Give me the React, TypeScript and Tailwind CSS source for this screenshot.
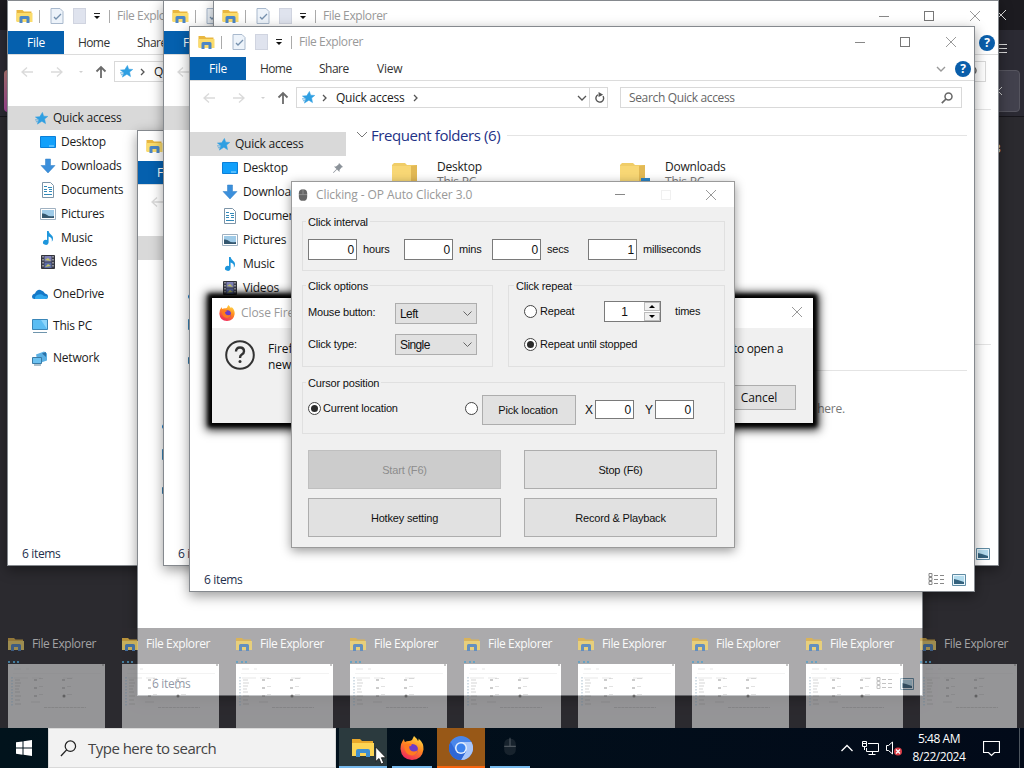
import { clsx } from "clsx";
import type { ReactNode } from "react";

const FolderIcon = ({ className }: { className?: string }) => (
  <svg viewBox="0 0 16 16" className={clsx("shrink-0", className)}>
    <path d="M0 2h6l1.500 1.500H15V13H0z" fill="#e9b740" />
    <path d="M0 5h16v9H0z" fill="#fbdc6c" />
    <path d="M3 15V9.500q0-1.500 1.500-1.500h7q1.500 0 1.500 1.500V15h-3v-4H6v4z" fill="#4c86c6" />
  </svg>
);

const StarIcon = ({ className }: { className?: string }) => (
  <svg viewBox="0 0 14 14" className={clsx("shrink-0", className)}>
    <path d="M8 .5l1.300 4 4.400.300-3.400 2.700 1 5-3.900-2.600L2.600 13l1.600-4.700L.5 5.500l4.600-.4z" fill="#2f9fe2" stroke="#2f9fe2" strokeWidth=".6" />
    <path d="M0 8.500h4M1 10.500h2.500" stroke="#5aa9dd" />
  </svg>
);

const sideIcons: Record<string, ReactNode> = {
  Desktop: (
    <>
      <path d="M.5 2.500h15v11H.5z" fill="#12a0fb" stroke="#0b7fd8" />
      <path d="M9 12h5" stroke="#9bdcff" />
    </>
  ),
  Downloads: <path d="M5.500 1h5v6.500H15L8 15 1 7.500h4.500z" fill="#3b8fdb" stroke="#2f7cc4" strokeWidth=".5" />,
  Documents: (
    <>
      <path d="M2.500.5h8l3 3v12h-11z" fill="#fff" stroke="#7d95a8" />
      <path d="M4 4.500h3M4 7.500h3M9 7.500h3M4 9.500h3M9 9.500h3M4 12.500h8M8 5.500h4" stroke="#3289b8" />
    </>
  ),
  Pictures: (
    <>
      <path d="M.5 2.500h15v11H.5z" fill="#fff" stroke="#9fb1c1" />
      <path d="M2 4h12v8H2z" fill="#9fcbe8" />
      <path d="M2 12V7.500q3-.500 5 1.500t7 1v2z" fill="#34576f" />
    </>
  ),
  Music: (
    <path
      d="M7 1h1.600q.4 2.500 2.700 4t1.500 5q-.5 1-1 1.500.8-3.800-3.200-5V12.500a2.800 2.500 0 1 1-1.600-2.400z"
      fill="#1e96dc"
    />
  ),
  Videos: (
    <>
      <path d="M1.500 1.500h13v13h-13z" fill="#3c3f4d" stroke="#33343b" />
      <path d="M4.500 2h7v5.500h-7z" fill="#7f82b8" />
      <path d="M4.500 8.500h7V14h-7z" fill="#596aa8" />
      <path d="M5 6l3-2 3 3zM5 13l3-3 3 2z" fill="#c3c565" />
      <path d="M3 2v12M13 2v12" stroke="#e3e3e3" strokeDasharray="1.500 1.500" />
    </>
  ),
  OneDrive: (
    <>
      <path d="M0 11q0-3 3-3.500Q5 3 8.500 4T13 7.500q3 .5 3 3T13.500 13H2.500Q0 13 0 11z" fill="#1579c8" />
      <path d="M3 13q-.5-4 4-4.500 3-1 5 1.500 3 0 4 1-.5 2-3 2z" fill="#33a9ee" />
    </>
  ),
  "This PC": (
    <>
      <path d="M.5 1.500h15v10H.5z" fill="#5bbdf3" stroke="#3a86b8" />
      <path d="M9 2h6v9z" fill="#8cd5fb" />
      <path d="M1 14.500h14" stroke="#6f95ad" />
    </>
  ),
  Network: (
    <>
      <path d="M4 4.500l8-3 3 2v7l-9 3z" fill="#5cb0e3" />
      <path d="M0.500 7.500h9v6h-9z" fill="#6cc1f0" stroke="#3a7ba6" />
      <path d="M10 3.500l4-1.500v5z" fill="#2a72a8" />
      <path d="M2 15h7" stroke="#5d8197" />
    </>
  ),
};

const quickLinks = ["Desktop", "Downloads", "Documents", "Pictures", "Music", "Videos"];
const drives = ["OneDrive", "This PC", "Network"];

const SideIcon = ({ name }: { name: string }) => (
  <svg viewBox="0 0 16 16" className="w-4 h-4 shrink-0">
    {sideIcons[name]}
  </svg>
);

const CloseGlyph = () => (
  <svg viewBox="0 0 12 12" className="w-3 h-3">
    <path d="M1 1l10 10M11 1L1 11" stroke="#999" fill="none" />
  </svg>
);

const ViewIcons = () => (
  <div className="flex items-center gap-[7px]">
    <svg viewBox="0 0 17 13" className="w-[17px] h-[13px]" fill="none">
      <path d="M1 .5h3v3H1zM1 4.500h3v3H1zM1 8.500h3v3H1z" stroke="#888" />
      <path d="M6 2.500h11M6 6.500h11M6 10.500h11" stroke="#888" strokeDasharray="4 2" />
    </svg>
    <svg viewBox="0 0 14 12" className="w-[14px] h-3">
      <path d="M.5.5h13v11H.5z" fill="#eaf6fc" stroke="#5f8ba3" />
      <path d="M2 2h10v8H2z" fill="#b4dcee" />
      <path d="M2 5l4 1 6 2v2H2z" fill="#34627d" />
    </svg>
  </div>
);

const FolderTile = ({ name, badge }: { name: string; badge?: boolean }) => (
  <div className="flex w-[228px]">
    <svg viewBox="0 0 30 30" className="w-[30px] h-[30px] shrink-0">
      <path d="M0 6l2-2h11l2 2h10v20H0z" fill="#f0cd68" />
      <path d="M0 7h19v22H0z" fill="#f8d775" />
      <path d="M19 7l6-1v21l-6 2z" fill="#e2b955" />
      {badge && <path d="M21 19h9v10h-9z" fill="#2b84c6" />}
    </svg>
    <div className="flex flex-col pl-[15px] leading-[15px]">
      <span>{name}</span>
      <span className="text-[#777]">This PC</span>
    </div>
  </div>
);

const ExplorerWindow = ({ className, active }: { className: string; active?: boolean }) => (
  <div
    className={clsx(
      "absolute w-[786px] h-[566px] flex flex-col overflow-hidden bg-white border border-[#85898e] text-[12px] tracking-[-0.22px] text-[#1b1b1b] shadow-[0_4px_12px_rgba(0,0,0,0.4)]",
      className
    )}
  >
    {/* Title bar */}
    <div className="h-[30px] shrink-0 flex items-center text-[#999]">
      <FolderIcon className="ml-[8px] w-[17px] h-4" />
      <span className="ml-[6px] w-px h-[13px] bg-[#aaa]" />
      <svg viewBox="0 0 14 16" className="ml-[10px] w-[14px] h-4">
        <path d="M1 .5h9l3 3v12H1z" fill="#edf3fa" stroke="#a9b9cd" />
        <path d="M4 9l2 2 5-5" stroke="#7691ae" strokeWidth="1.300" fill="none" />
      </svg>
      <span className="ml-[9px] w-[13px] h-4 bg-[#dfe3ee] border border-[#d0d4e0]" />
      <svg viewBox="0 0 8 8" className="ml-[7px] w-2 h-2">
        <path d="M1 1.500h6" stroke="#222" />
        <path d="M1 4h6L4 7z" fill="#111" />
      </svg>
      <span className="ml-2 w-px h-[13px] bg-[#aaa]" />
      <span className="ml-[7px] tracking-[-0.4px]">File Explorer</span>
      <div className="ml-auto flex">
        <span className="w-[46px] flex justify-center items-center">
          <span className="w-[10px] h-px bg-[#888]" />
        </span>
        <span className="w-[44px] flex justify-center items-center">
          <span className="w-[10px] h-[10px] border border-[#777]" />
        </span>
        <span className="w-[47px] flex justify-center items-center">
          <CloseGlyph />
        </span>
      </div>
    </div>

    {/* Ribbon tabs */}
    <div className="h-6 shrink-0 flex items-center border-b border-[#dcdcdc] text-[#333]">
      <span className="w-[56px] h-[23px] flex items-center justify-center bg-[#0560ae] text-white">File</span>
      <span className="ml-[14px] w-[59px] tracking-[-0.6px]">Home</span>
      <span className="w-[58px] tracking-[-0.5px]">Share</span>
      <span>View</span>
      <svg viewBox="0 0 10 6" className="ml-auto w-[10px] h-[6px]">
        <path d="M1 1l4 4 4-4" stroke="#999" strokeWidth="1.400" fill="none" />
      </svg>
      <span className="ml-[9px] mr-[3px] w-4 h-4 rounded-full bg-[#0a5eaa] text-white text-[12px] font-bold leading-4 text-center">
        ?
      </span>
    </div>

    {/* Address bar */}
    <div className="mt-[6px] h-[21px] shrink-0 flex items-center">
      <svg viewBox="0 0 94 16" className="ml-[7px] w-[94px] h-4" fill="none">
        <path d="M7 8h11M12 3.500L7 8l5 4.500M36 8h11M42 3.500L47 8l-5 4.500" stroke="#dadada" strokeWidth="1.300" />
        <path d="M64 7h4l-2 2z" fill="#d0d0d0" />
        <path d="M86 14V3M81.500 7.500L86 3l4.500 4.500" stroke="#6b6b6b" strokeWidth="1.800" />
      </svg>
      <div className="ml-[5px] w-[312px] h-[21px] border border-[#d9d9d9] flex items-center">
        <StarIcon className="ml-[5px] w-[13px] h-[13px]" />
        <svg viewBox="0 0 5 8" className="ml-[7px] w-[5px] h-2">
          <path d="M1 1l3 3-3 3" stroke="#555" strokeWidth="1.300" fill="none" />
        </svg>
        <span className="ml-[9px]">Quick access</span>
        <svg viewBox="0 0 5 8" className="ml-2 w-[5px] h-2">
          <path d="M1 1l3 3-3 3" stroke="#555" strokeWidth="1.300" fill="none" />
        </svg>
        <svg viewBox="0 0 10 6" className="ml-auto w-[10px] h-[6px]">
          <path d="M1 1l4 4 4-4" stroke="#555" strokeWidth="1.300" fill="none" />
        </svg>
        <span className="ml-[2px] w-px h-full bg-[#d9d9d9]" />
        <svg viewBox="0 0 12 12" className="ml-[4px] mr-[2px] w-[11px] h-[11px]">
          <path d="M9.800 4.500A4.200 4.200 0 1 1 4.500 3" stroke="#555" strokeWidth="1.500" fill="none" />
          <path d="M5 0v5.500L10 3z" fill="#555" />
        </svg>
      </div>
      <div className="ml-[12px] w-[342px] h-[21px] border border-[#d9d9d9] flex items-center justify-between pl-2 pr-[8px] text-[#666]">
        <span className="tracking-[-0.35px]">Search Quick access</span>
        <svg viewBox="0 0 12 12" className="w-3 h-3">
          <circle cx="7.500" cy="4.500" r="3.500" stroke="#666" strokeWidth="1.500" fill="none" />
          <path d="M5 7L.8 11.200" stroke="#666" strokeWidth="1.700" />
        </svg>
      </div>
    </div>

    <div className="flex-1 min-h-0 flex">
      {/* Navigation pane */}
      <div className="w-[156px] shrink-0 pt-[24px] flex flex-col">
        <div className="h-6 shrink-0 flex items-center bg-[#d9d9d9] pl-[27px]">
          <StarIcon className="w-[13px] h-[13px]" />
          <span className="ml-[5px]">Quick access</span>
        </div>
        {quickLinks.map((name) => (
          <div key={name} className="h-6 shrink-0 flex items-center pl-[32px]">
            <SideIcon name={name} />
            <span className="ml-[5px]">{name}</span>
            {name === "Desktop" && (
              <svg viewBox="0 0 10 10" className="ml-auto mr-[3px] w-[10px] h-[10px]">
                <path d="M6 0l4 4-1.500.5L6.500 7v2L4 6.500.5 10 0 9.500 3.500 6 1 3.500h2L5.500 1.500z" fill="#8b9299" />
              </svg>
            )}
          </div>
        ))}
        {drives.map((name) => (
          <div key={name} className="h-6 mt-2 shrink-0 flex items-center pl-[24px]">
            <SideIcon name={name} />
            <span className="ml-[5px]">{name}</span>
          </div>
        ))}
      </div>

      {/* File list */}
      <div className="flex-1 flex flex-col pt-[17px] pr-[7px]">
        <div className="pl-[11px] h-5 flex items-center text-[15px] tracking-[-0.42px] leading-[20px] text-[#1e3287]">
          <svg viewBox="0 0 10 6" className="w-[10px] h-[6px]">
            <path d="M0 0l5 5 5-5" stroke="#777" fill="none" />
          </svg>
          {active && <span className="ml-1 mr-[7px] -mt-px">Frequent folders (6)</span>}
          <span className="flex-1 h-px bg-[#e4e4e4]" />
        </div>
        <div className="mt-[14px] pl-[46px] h-[30px] flex">
          {active && (
            <>
              <FolderTile name="Desktop" />
              <FolderTile name="Downloads" badge />
            </>
          )}
        </div>
        <div className="mt-[181px] h-px shrink-0 bg-[#e4e4e4]" />
        {active && <span className="mt-[29px] mr-[122px] self-end text-[#777]">here.</span>}
      </div>
    </div>

    {/* Status bar */}
    <div className="h-[23px] shrink-0 flex items-center justify-between pl-[14px] pr-[8px] text-[#1e2f4d]">
      <span className="tracking-[-0.35px]">6 items</span>
      <ViewIcons />
    </div>
  </div>
);

const FirefoxIcon = ({ className }: { className?: string }) => (
  <svg viewBox="0 0 24 24" className={clsx("shrink-0", className)}>
    <defs>
      <linearGradient id="flame" x1="0.800" y1="0" x2="0.300" y2="1">
        <stop offset="0" stopColor="#ffe14a" />
        <stop offset="0.450" stopColor="#ff8a1f" />
        <stop offset="1" stopColor="#f0245f" />
      </linearGradient>
    </defs>
    <path
      d="M14 0q3 2.500 4 5 1-1 .5-2.500Q24 7 23.500 13.500 22 24 12 24 1.500 23.500.5 13 .5 7 4 3q0 2 1 3 1.500-1 4-1 1.500 0 3-1 1-2 2-4z"
      fill="url(#flame)"
    />
    <circle cx="12.500" cy="13.500" r="5.500" fill="#6d3bc7" />
    <path d="M4 10q4-4 8-1.500-1 2-3 2 .5 5 5 5 3 0 4-2.500-.5 6-6 6.500Q5 19 4 10z" fill="#ff7a20" />
  </svg>
);

const FirefoxDialog = () => (
  <div className="absolute left-[212px] top-[298px] w-[601px] h-[125px] flex flex-col bg-[#f0f0f0] text-[12px] tracking-[-0.1px] text-[#111] shadow-[0_0_4px_4px_#000,0_1px_9px_6px_rgba(0,0,0,0.85)]">
    <div className="h-[30px] shrink-0 flex items-center bg-white pl-[7px] pr-[10px] text-[#999]">
      <FirefoxIcon className="w-4 h-4" />
      <span className="ml-[6px]">Close Firefox</span>
      <span className="ml-auto -mt-[2px]">
        <CloseGlyph />
      </span>
    </div>
    <div className="flex pl-[13px] pt-[12px]">
      <svg viewBox="0 0 30 30" className="w-[30px] h-[30px]" fill="none">
        <circle cx="15" cy="15" r="13.800" stroke="#333" strokeWidth="2" />
        <path d="M11 11.500q0-4 4-4t4 3.700q0 2-2.200 3.300Q15 15.600 15 18" stroke="#333" strokeWidth="2.400" />
        <circle cx="15" cy="21.500" r="1.500" fill="#333" />
      </svg>
      <div className="ml-[13px] pt-px w-[515px] leading-4 flex flex-col">
        <div className="flex justify-between">
          <span>Firefox</span>
          <span className="tracking-[-0.35px]">to open a</span>
        </div>
        <span>new</span>
      </div>
    </div>
    <div className="mt-auto mb-[13px] mr-[17px] self-end w-[76px] h-[25px] border border-[#adadad] bg-[#e1e1e1] flex items-center justify-center pl-[2px]">
      Cancel
    </div>
  </div>
);

const MouseIcon = ({ className }: { className?: string }) => (
  <svg viewBox="0 0 12 16" className={clsx("shrink-0", className)}>
    <path d="M1 6q0-5 5-5t5 5v4q0 5-5 5t-5-5z" fill="currentColor" />
    <path d="M6 0v7M1 7.500h10" stroke="#fff" strokeOpacity=".3" fill="none" />
  </svg>
);

const NumberBox = ({ value, className }: { value: string; className?: string }) => (
  <span
    className={clsx(
      "border border-[#7a7a7a] bg-white flex items-center justify-end pr-[2px] text-[12px]",
      className
    )}
  >
    {value}
  </span>
);

const Radio = ({ checked }: { checked?: boolean }) => (
  <span className="w-[13px] h-[13px] shrink-0 rounded-full border border-[#444] bg-white flex items-center justify-center">
    {checked && <span className="w-[7px] h-[7px] rounded-full bg-[#2b2b2b]" />}
  </span>
);

const Select = ({ value }: { value: string }) => (
  <span className="w-[82px] h-[21px] border border-[#adadad] bg-[#e1e1e1] flex items-center justify-between pl-1 pr-1 text-[12px] tracking-[-0.6px]">
    {value}
    <svg viewBox="0 0 9 6" className="w-[9px] h-[6px]">
      <path d="M.5.5l4 4 4-4" stroke="#666" fill="none" />
    </svg>
  </span>
);

const Group = ({ title, className, children }: { title: string; className: string; children: ReactNode }) => (
  <div className={clsx("border border-[#e0e0e0] flex flex-col", className)}>
    <span className="-mt-[7px] ml-[3px] px-[2px] self-start h-[14px] leading-[14px] bg-[#f0f0f0]">{title}</span>
    {children}
  </div>
);

const intervals = [
  { label: "hours", value: "0", width: "w-[96px]" },
  { label: "mins", value: "0", width: "w-[88px]" },
  { label: "secs", value: "0", width: "w-[96px]" },
  { label: "milliseconds", value: "1", width: "w-[120px]" },
];

const actions = ["Start (F6)", "Stop (F6)", "Hotkey setting", "Record & Playback"];

const AutoClicker = () => (
  <div className="absolute left-[291px] top-[181px] w-[444px] h-[367px] flex flex-col border border-[#9a9a9a] bg-[#f0f0f0] text-[#111] shadow-[0_3px_10px_rgba(0,0,0,0.4)]">
    <div className="h-[25px] shrink-0 flex items-center bg-white pl-[6px] text-[#999] text-[12px] tracking-[-0.1px]">
      <MouseIcon className="w-[10px] h-[14px] text-[#666]" />
      <span className="ml-2">Clicking - OP Auto Clicker 3.0</span>
      <div className="ml-auto flex">
        <span className="w-[46px] flex justify-center items-center">
          <span className="w-[10px] h-px bg-[#888]" />
        </span>
        <span className="w-[45px] flex justify-center items-center">
          <span className="w-[10px] h-[10px] border border-[#f0f0f0]" />
        </span>
        <span className="w-[46px] flex justify-center items-center">
          <CloseGlyph />
        </span>
      </div>
    </div>

    <div className="flex-1 flex flex-col pl-[10px] pt-[14px] font-['Liberation_Sans',Arial,sans-serif] text-[11px] tracking-[-0.18px]">
      <Group title="Click interval" className="w-[423px] h-[50px]">
        <div className="mt-[10px] pl-[5px] flex">
          {intervals.map((item) => (
            <div key={item.label} className={clsx("flex items-center", item.width)}>
              <NumberBox value={item.value} className="w-[49px] h-[21px]" />
              <span className="ml-[6px]">{item.label}</span>
            </div>
          ))}
        </div>
      </Group>

      <div className="mt-[14px] flex gap-[15px]">
        <Group title="Click options" className="w-[191px] h-[82px]">
          <div className="mt-[10px] pl-[5px] flex items-center">
            <span className="w-[87px] -mt-[2px]">Mouse button:</span>
            <Select value="Left" />
          </div>
          <div className="mt-[10px] pl-[5px] flex items-center">
            <span className="w-[87px] -mt-px">Click type:</span>
            <Select value="Single" />
          </div>
        </Group>
        <Group title="Click repeat" className="w-[217px] h-[82px] [&>span:first-child]:ml-[5px]">
          <div className="mt-[8px] pl-[15px] flex items-center">
            <Radio />
            <span className="ml-[3px] w-[64px]">Repeat</span>
            <span className="w-[57px] h-[21px] border border-[#7a7a7a] bg-white flex items-center text-[12px]">
              <span className="flex-1 text-center">1</span>
              <span className="w-[16px] h-[19px] flex flex-col gap-px">
                <span className="flex-1 border border-[#bbb] bg-[#f0f0f0] flex items-center justify-center">
                  <svg viewBox="0 0 6 3" className="w-[6px] h-[3px]">
                    <path d="M0 3l3-3 3 3z" />
                  </svg>
                </span>
                <span className="flex-1 border border-[#bbb] bg-[#f0f0f0] flex items-center justify-center">
                  <svg viewBox="0 0 6 3" className="w-[6px] h-[3px]">
                    <path d="M0 0l3 3 3-3z" />
                  </svg>
                </span>
              </span>
            </span>
            <span className="ml-[14px]">times</span>
          </div>
          <div className="mt-[14px] h-[17px] pl-[15px] flex items-center">
            <Radio checked />
            <span className="ml-[3px]">Repeat until stopped</span>
          </div>
        </Group>
      </div>

      <Group title="Cursor position" className="mt-[15px] w-[423px] h-[52px]">
        <div className="mt-[5px] pl-[5px] flex items-center">
          <span className="-mt-[3px] flex items-center">
            <Radio checked />
            <span className="ml-[2px] w-[142px]">Current location</span>
            <Radio />
          </span>
          <span className="ml-[4px] w-[94px] h-[30px] border border-[#adadad] bg-[#e1e1e1] flex items-center justify-center pr-[2px]">
            Pick location
          </span>
          <span className="-mt-px flex items-center">
            <span className="ml-[9px] w-[10px] text-[12px]">X</span>
            <NumberBox value="0" className="w-[39px] h-[19px]" />
            <span className="ml-[11px] w-[10px] text-[12px]">Y</span>
            <NumberBox value="0" className="w-[39px] h-[19px]" />
          </span>
        </div>
      </Group>

      <div className="mt-[16px] ml-[6px] w-[410px] grid grid-cols-[193px_193px] gap-x-[23px] gap-y-[9px]">
        {actions.map((label, i) => (
          <span
            key={label}
            className={clsx(
              "h-[39px] border flex items-center justify-center pt-px",
              i === 0 ? "border-[#bfbfbf] bg-[#cccccc] text-[#8d8d8d]" : "border-[#adadad] bg-[#e1e1e1]"
            )}
          >
            {label}
          </span>
        ))}
      </div>
    </div>
  </div>
);

const Thumbnail = () => (
  <svg viewBox="0 0 97 64" className="w-[97px] h-16 shrink-0 bg-white/50" fill="none">
    <path d="M6 5h7M18 5h3M6 14h14M24 14h9M55 14h10" stroke="#777" strokeOpacity=".25" strokeWidth=".7" />
    <path d="M5 9.500h88" stroke="#777" strokeOpacity=".15" strokeWidth=".6" />
    <path d="M4 13v29" stroke="#4c7796" strokeOpacity=".4" strokeWidth="1.200" strokeDasharray="1.500 1.500" />
    <path d="M7 16h5M7 19h6M7 22h5M7 25h4M7 28h5M7 32h6M7 36h5M7 40h6" stroke="#555" strokeOpacity=".35" strokeWidth=".7" />
    <path d="M26 16h3M26 24h3M26 32h3M54 16h3M54 24h3" stroke="#555" strokeOpacity=".4" strokeWidth="1.500" />
    <path d="M31 14.500h4M31 22.500h4M31 30.500h4M59 14.500h5M59 22.500h4M59 30.500h5M23 38h9" stroke="#555" strokeOpacity=".25" strokeWidth=".7" />
    <circle cx="56" cy="32" r="1.500" fill="#444" fillOpacity=".65" />
    <path d="M36 43.500h42" stroke="#444" strokeOpacity=".25" strokeDasharray="3 .7" strokeWidth=".8" />
    <path d="M94 1h2" stroke="#444" strokeOpacity=".6" />
  </svg>
);

const ThumbnailStrip = () => (
  <div className="absolute left-0 top-[628px] w-[1024px] h-[100px] flex overflow-hidden">
    <div className="w-2 shrink-0 bg-[#2c2b30]/40" />
    {Array.from({ length: 9 }, (_, i) => (
      <div key={i} className="w-[114px] shrink-0 flex flex-col">
        <div className="h-9 bg-[#2c2b30]/40 flex flex-col justify-between">
          <div className="h-8 flex items-center">
            <FolderIcon className={clsx("w-4 h-4", i === 0 || i === 8 ? "opacity-55" : "opacity-75")} />
            <span
              className={clsx(
                "ml-2 text-[12px] tracking-[-0.4px]",
                i === 0 || i === 8 ? "text-[#a3a3a5]" : "text-[#fafafa] font-medium"
              )}
            >
              File Explorer
            </span>
          </div>
          <span className="w-[11px] h-[3px] border-t-2 border-dotted border-[#4e9ecb]/70" />
        </div>
        <div className="flex">
          <Thumbnail />
          <div className="flex-1 bg-[#2c2b30]/40" />
        </div>
      </div>
    ))}
  </div>
);

const Taskbar = () => (
  <div className="absolute left-0 top-[728px] w-[1024px] h-10 flex items-center bg-linear-to-r from-[#01131c] to-[#020a19] text-white">
    <div className="w-12 flex justify-center">
      <svg viewBox="0 0 16 16" className="w-4 h-4" fill="#fff">
        <path d="M0 2.300L6.500 1.400v6.200H0zM7.500 1.200L16 0v7.600H7.500zM0 8.500h6.500v6.200L0 13.700zM7.500 8.500H16V16l-8.500-1.200z" />
      </svg>
    </div>
    <div className="w-[288px] h-10 bg-[#f2f2f2] border border-[#d9d9d9] flex items-center pl-[11px] text-[#444]">
      <svg viewBox="0 0 18 18" className="w-[17px] h-[17px]" fill="none">
        <circle cx="11" cy="6.500" r="5.500" stroke="#222" strokeWidth="1.300" />
        <path d="M7 10.500L1 17" stroke="#222" strokeWidth="1.400" />
      </svg>
      <span className="ml-[11px] text-[15px] tracking-[-0.52px]">Type here to search</span>
    </div>
    <div className="ml-[3px] w-12 h-10 flex flex-col items-center justify-between bg-[#2b3a3e] pt-[8px]">
      <svg viewBox="0 0 24 24" className="w-6 h-6">
        <path d="M1 3h8l2 2h11v14H1z" fill="#e9a82a" />
        <path d="M1 7h22v13H1z" fill="#fcd454" />
        <path d="M5 21v-6q0-2 2-2h10q2 0 2 2v6h-4v-4H9v4z" fill="#3f8fd0" />
      </svg>
      <span className="w-full h-[2px] bg-[#76b9ed]" />
    </div>
    <div className="w-[50px] h-10 flex flex-col items-center justify-between pt-[8px]">
      <FirefoxIcon className="w-6 h-6" />
      <span className="w-10 h-[2px] bg-[#76b9ed]" />
    </div>
    <div className="w-12 h-10 flex flex-col items-center justify-between bg-[#985817] pt-[8px]">
      <svg viewBox="0 0 24 24" className="w-6 h-6">
        <circle cx="12" cy="12" r="12" fill="#4a86ea" />
        <path d="M12 6h10.400A12 12 0 0 1 12 24l5.200-9z" fill="#a9c6fa" />
        <path d="M1.600 6A12 12 0 0 0 12 24l5.200-9-10.400 0z" fill="#2f67d6" />
        <circle cx="12" cy="12" r="6" fill="#e6effd" />
        <circle cx="12" cy="12" r="4.500" fill="#3c82ee" />
      </svg>
      <span className="w-full h-[2px] bg-[#f7650f]" />
    </div>
    <div className="w-[49px] h-10 flex flex-col items-center justify-between pt-[9px]">
      <MouseIcon className="w-[14px] h-5 text-[#1d2832] opacity-80" />
      <span className="w-10 h-[2px] bg-[#76b9ed]" />
    </div>

    {/* Tray */}
    <div className="ml-auto flex items-center">
      <svg viewBox="0 0 12 8" className="w-3 h-2" fill="none">
        <path d="M.5 7L6 1.500 11.500 7" stroke="#fff" strokeWidth="1.300" />
      </svg>
      <svg viewBox="0 0 17 14" className="ml-[9px] w-[17px] h-[14px]" fill="none" stroke="#fff">
        <path d="M6 2.500h10.500v8H4.500V7M10.500 10.500v3M6.500 13.500h7M.5.5h4v5h-4zM2.500 5.500V9M.5 2.500h4" />
      </svg>
      <svg viewBox="0 0 17 15" className="ml-[7px] w-[17px] h-[15px]" fill="none">
        <path d="M.5 4.500h2l4-3.500v12l-4-3.500h-2z" stroke="#fff" />
        <circle cx="12" cy="10.500" r="4" fill="#d83b45" />
        <path d="M10 8.500l4 4M14 8.500l-4 4" stroke="#fff" strokeWidth="1.300" />
      </svg>
      <div className="ml-2 w-[56px] text-[12px] leading-[18px] tracking-[-0.45px] text-center whitespace-nowrap">
        <div>5:48 AM</div>
        <div>8/22/2024</div>
      </div>
      <svg viewBox="0 0 17 17" className="ml-[16px] w-[17px] h-[17px]" fill="none">
        <path d="M.5 1.500h16v11h-5l-3 3-3-3h-5z" stroke="#fff" strokeWidth="1.200" />
      </svg>
      <span className="ml-[19px] mr-1 w-px h-10 bg-[#4d555e]" />
    </div>
  </div>
);

/* Edges of the browser that stay visible behind the explorer windows */
const BrowserBackdrop = () => (
  <div className="w-full h-full flex flex-col">
    <div className="h-[30px] bg-[#1c1b20] flex items-center justify-end pr-[17px]">
      <svg viewBox="0 0 12 12" className="w-3 h-3">
        <path d="M1 1l10 10M11 1L1 11" stroke="#e5e5e5" fill="none" />
      </svg>
    </div>
    <div className="h-[36px] bg-[#2b2a33] flex items-center justify-end pr-[17px]">
      <svg viewBox="0 0 12 10" className="w-3 h-[10px]">
        <path d="M0 1.500h12M0 5.500h12M0 9.500h12" stroke="#ddd" />
      </svg>
    </div>
    <div className="h-[51px] pt-1 pl-1 pr-1 bg-[#2b2a33] border-b border-[#17161b] flex justify-between">
      <span className="w-3 h-[42px] rounded-l bg-linear-to-b from-[#b77b77] to-[#a8459c]" />
      <span className="w-10 h-[42px] rounded border border-[#56555f] bg-[#42414d] flex items-center justify-center">
        <svg viewBox="0 0 6 10" className="w-[6px] h-[10px]">
          <path d="M5 1L1 5l4 4" stroke="#ccc" fill="none" />
        </svg>
      </span>
    </div>
    <div className="flex-1 bg-[#2b2a2f] pt-[22px] pr-[23px] text-right text-[13px] leading-[18px] text-[#ddd]">3</div>
  </div>
);

const App = () => (
  <div className="relative w-[1024px] h-[768px] overflow-hidden bg-[#2b2a2f] font-['Open_Sans','Noto_Sans',sans-serif]">
    <BrowserBackdrop />
    <ExplorerWindow className="left-[7px] top-0" />
    <ExplorerWindow className="left-[137px] top-[130px]" />
    <ExplorerWindow className="left-[163px] top-0" />
    <ExplorerWindow className="left-[213px] top-0" />
    <ExplorerWindow className="left-[189px] top-[26px]" active />
    <FirefoxDialog />
    <AutoClicker />
    <ThumbnailStrip />
    <Taskbar />
    <svg viewBox="0 0 12 19" className="absolute left-[375px] top-[746px] w-3 h-[19px]">
      <path d="M.7 1v14.500l3.300-3 2.200 5.500 2.500-1-2.300-5.300H11z" fill="#fff" stroke="#111" strokeWidth=".8" />
    </svg>
  </div>
);

export default App;
